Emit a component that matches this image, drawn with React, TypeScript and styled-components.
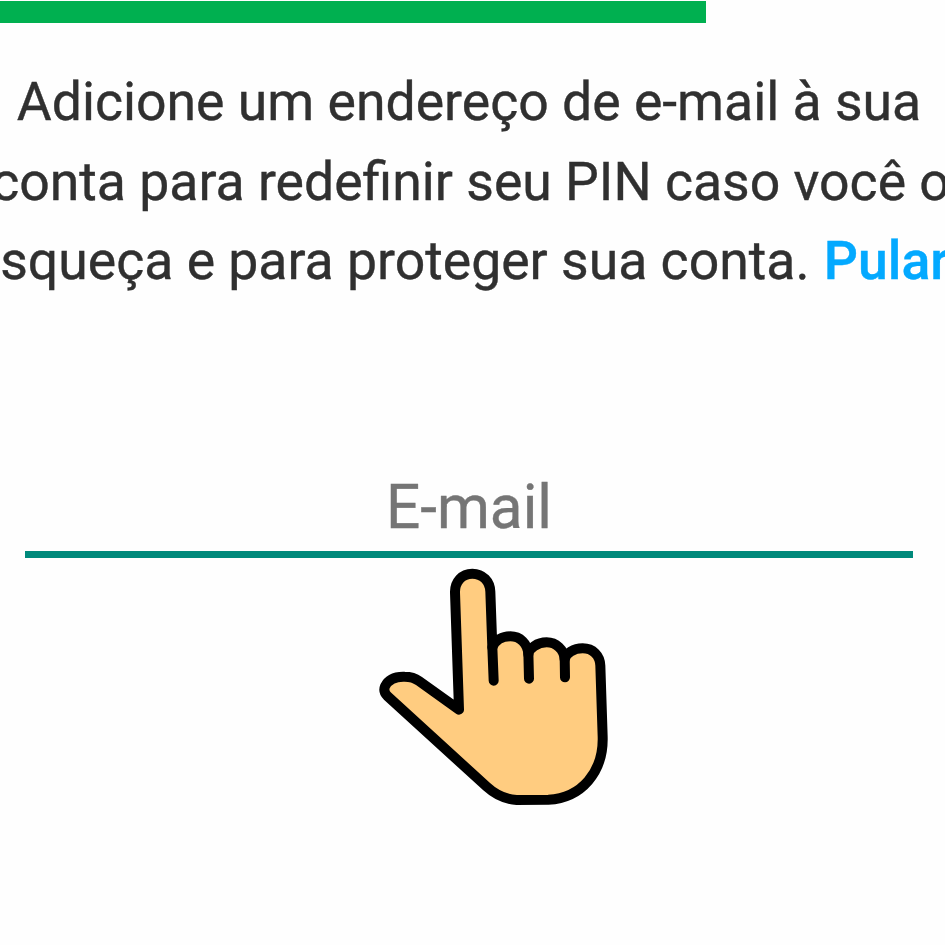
import React from "react";
import styled, { createGlobalStyle } from "styled-components";

const GlobalStyle = createGlobalStyle`
  *, *::before, *::after { box-sizing: border-box; }
  html, body { margin: 0; padding: 0; background: #fefefe; overflow: hidden; }
`;

const Screen = styled.main`
  display: flex;
  flex-direction: column;
  width: 945px;
  height: 945px;
  padding-top: 1px;
  overflow: hidden;
  background: #fefefe;
  font-family: Roboto, "Liberation Sans", sans-serif;
`;

const Progress = styled.div`
  flex: none;
  width: 706px;
  height: 22px;
  background: #00b050;
`;

const Column = styled.section`
  display: flex;
  flex-direction: column;
  align-items: center;
  width: 938px;
`;

const Message = styled.p`
  display: flex;
  flex-direction: column;
  align-items: center;
  margin: 39px 0 0;
  color: #303030;
  font-size: 53.55px;
  line-height: 79.5px;
  white-space: nowrap;
  -webkit-text-stroke: 0.4px currentColor;
`;

const Line = styled.span<{ $leading?: number; $trailing?: number }>`
  display: block;
  padding-left: ${({ $leading = 0 }) => $leading}px;
  padding-right: ${({ $trailing = 0 }) => $trailing}px;
`;

const SkipLink = styled.a`
  margin-left: 1px;
  color: #03a9ff;
  font-weight: 500;
`;

const Field = styled.label`
  display: flex;
  justify-content: center;
  align-items: flex-start;
  width: 888px;
  height: 92px;
  margin-top: 165.5px;
  border-bottom: 7px solid #00897b;
`;

const Placeholder = styled.span`
  color: #757575;
  font-size: 60.3px;
  line-height: 84px;
  -webkit-text-stroke: 0.4px currentColor;
`;

const Hand = styled.svg`
  display: block;
  width: 250px;
  height: 250px;
  margin: 2px 0 0 52px;
`;

function PointingHand() {
  return (
    <Hand viewBox="0 0 750 750" aria-hidden="true">
      <g stroke="#000" strokeWidth="30" strokeLinecap="round" strokeLinejoin="round">
        <path
          fill="#ffcc80"
          d="M267 449 L255 98 C254 65 276 41 307 41 C338 41 360 64 361 95 L367 262 C376 240 397 229 421 229 C450 229 473 250 475 283 C477 265 502 247 530 247 C558 247 582 268 584 298 C588 280 611 265 638 265 C669 265 690 287 691 317 L698 530 C701 635 635 714 535 719 L440 720 C404 718 375 703 350 680 L52 408 C43 399 41 389 45 379 C55 358 78 349 104 350 C120 350 135 354 147 363 Z"
        />
        <path fill="none" d="M367 262 L371 362 M475 275 L477 356 M584 290 L585 352" />
      </g>
    </Hand>
  );
}

export default function App() {
  return (
    <>
      <GlobalStyle />
      <Screen>
        <Progress />
        <Column>
          <Message>
            <Line>Adicione um endereço de e-mail à sua</Line>
            <Line $leading={3}>conta para redefinir seu PIN caso você o</Line>
            <Line $trailing={17}>
              esqueça e para proteger sua conta. <SkipLink>Pular</SkipLink>
            </Line>
          </Message>
          <Field>
            <Placeholder>E-mail</Placeholder>
          </Field>
          <PointingHand />
        </Column>
      </Screen>
    </>
  );
}
